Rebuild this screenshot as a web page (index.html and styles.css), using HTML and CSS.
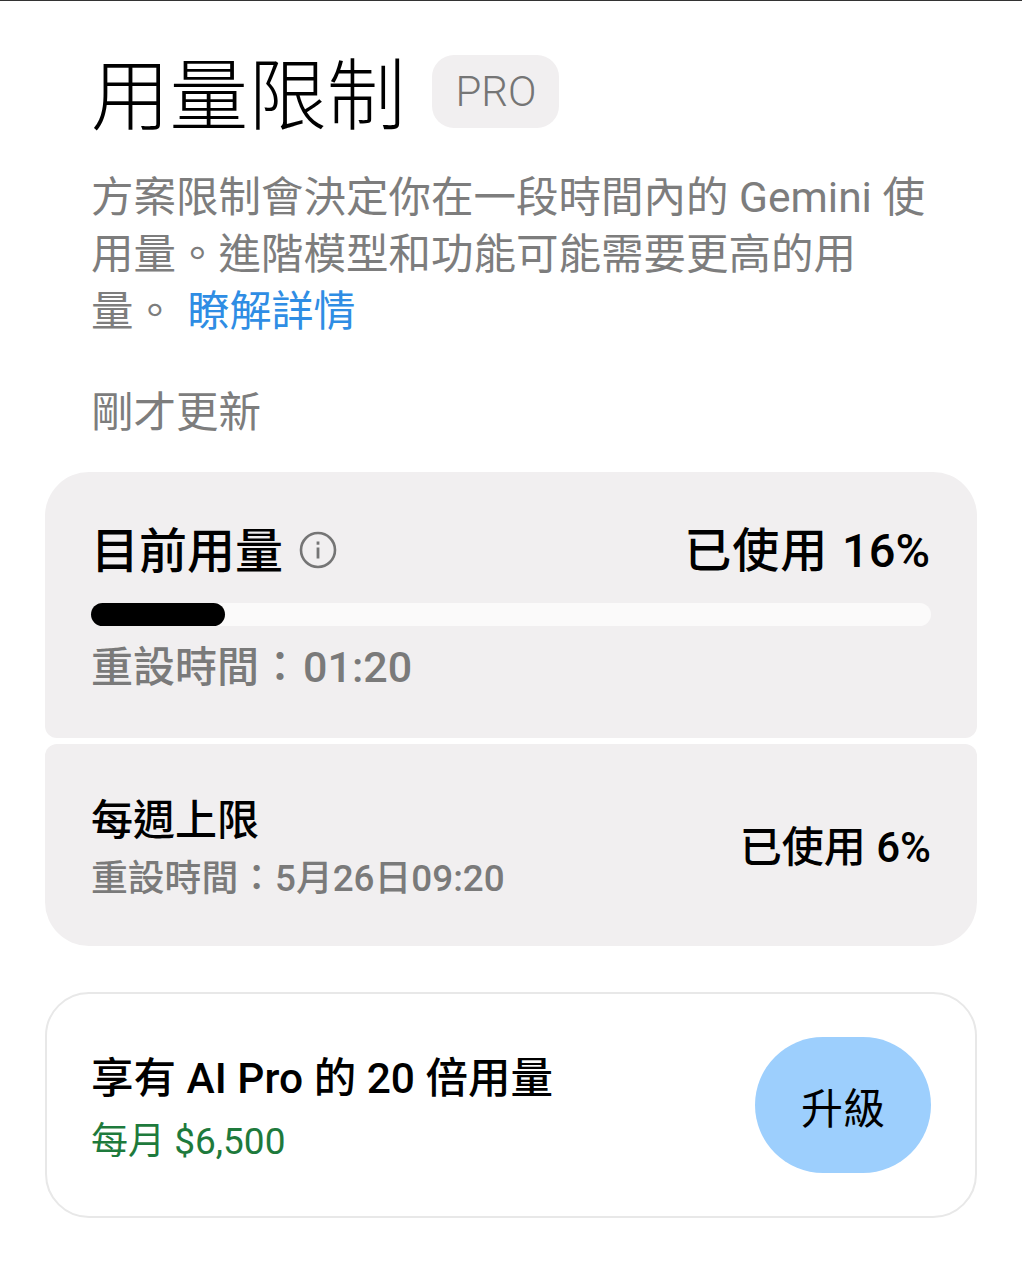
FILE: index.html
```html
<!DOCTYPE html>
<html lang="zh-Hant">
  <head>
    <meta charset="UTF-8" />
    <meta name="viewport" content="width=device-width, initial-scale=1.0" />
    <title>用量限制</title>
    <link rel="stylesheet" href="styles.css">
  </head>
  <body>
    <div class="page">
      <div class="intro">
        <div class="titleRow">
          <h1>用量限制</h1>
          <span class="badge">PRO</span>
        </div>
        <p class="desc">方案限制會決定你在一段時間內的 Gemini 使<br>用量。進階模型和功能可能需要更高的用<br>量。 <a href="#">瞭解詳情</a></p>
        <p class="updated">剛才更新</p>
      </div>

      <div class="usageCard current">
        <div class="rowTop">
          <div class="curTitle">
            <span class="curName">目前用量</span>
            <svg class="infoIcon" viewBox="0 0 38 38" width="38" height="38">
              <circle cx="19" cy="19" r="17" fill="none" stroke="#757575" stroke-width="2.6" />
              <rect x="17.6" y="16.5" width="2.8" height="11" fill="#757575" />
              <rect x="17.6" y="10.5" width="2.8" height="3.2" fill="#757575" />
            </svg>
          </div>
          <div class="curUsed"><span class="cjkWide">已使用</span> <span class="num">16%</span></div>
        </div>
        <div class="track"><div class="fill" style="width: 16%"></div></div>
        <div class="curReset">重設時間：<span class="num">01:20</span></div>
      </div>

      <div class="usageCard weekly">
        <div class="weekLeft">
          <div class="weekTitle">每週上限</div>
          <div class="weekReset">重設時間：5月26日09:20</div>
        </div>
        <div class="weekUsed">已使用 <span class="num">6%</span></div>
      </div>

      <div class="upgradeCard">
        <div class="upLeft">
          <div class="upTitle">享有 AI Pro 的 20 倍用量</div>
          <div class="upPrice">每月 $6,500</div>
        </div>
        <button class="upBtn">升級</button>
      </div>
    </div>
  </body>
</html>
```

FILE: styles.css
```css
* {
  box-sizing: border-box;
}
html,
body {
  margin: 0;
  padding: 0;
  background-color: #fff;
}
body {
  height: 1280px;
  overflow: hidden;
  font-family: Roboto, "Noto Sans CJK TC", sans-serif;
  color: #000;
  border-top: 1px solid #333;
}
.page {
  padding: 0 45px;
}
.intro {
  padding-left: 46px;
}
.titleRow {
  display: flex;
  align-items: flex-start;
  gap: 27px;
  padding-top: 54px;
}
.titleRow h1 {
  margin: 0;
  padding-top: 3px;
  font-size: 78.6px;
  line-height: 78px;
  font-weight: 300;
}
.badge {
  width: 127px;
  height: 73px;
  background-color: #f1eff0;
  border-radius: 22px;
  color: #757575;
  font-size: 42px;
  font-weight: 300;
  display: flex;
  align-items: center;
  justify-content: center;
}
.desc {
  margin: 33px 0 0;
  font-size: 42.5px;
  line-height: 57px;
  font-weight: 400;
  color: #7d7d7d;
}
.desc a {
  color: #2f8de4;
  text-decoration: none;
  font-size: 42px;
  margin-left: 1px;
}
.updated {
  margin: 44px 0 0;
  font-size: 42.5px;
  line-height: 57px;
  font-weight: 400;
  color: #7d7d7d;
}
.usageCard {
  background-color: #f1eff0;
  padding: 0 46px;
}
.current {
  margin-top: 31px;
  height: 266px;
  padding-top: 50px;
  border-radius: 44px 44px 12px 12px;
}
.rowTop {
  display: flex;
  justify-content: space-between;
  align-items: center;
  height: 56px;
}
.curTitle {
  display: flex;
  align-items: center;
  gap: 16px;
  font-size: 48px;
  font-weight: 500;
}
.curName {
  margin-bottom: 7px;
}
.curUsed {
  font-size: 47px;
  font-weight: 500;
  margin-bottom: 7px;
  margin-right: 1px;
}
.cjkWide {
  letter-spacing: 1px;
  margin-right: 2px;
}
.num {
  font-weight: 500;
}
.infoIcon {
  display: block;
}
.track {
  margin-top: 25px;
  height: 23px;
  background-color: #fbfafa;
  border-radius: 12px;
}
.fill {
  height: 100%;
  background-color: #000;
  border-radius: 12px;
}
.curReset {
  margin-top: 13px;
  font-size: 42px;
  line-height: 57px;
  font-weight: 500;
  color: #7a7a7a;
}
.curReset .num {
  font-size: 43px;
  margin-left: 2px;
}
.weekly {
  margin-top: 6px;
  height: 202px;
  display: flex;
  justify-content: space-between;
  align-items: center;
  border-radius: 12px 12px 44px 44px;
}
.weekLeft {
  padding-top: 8px;
}
.weekTitle {
  font-size: 42px;
  line-height: 57px;
  font-weight: 500;
}
.weekReset {
  margin-top: 1px;
  font-size: 36.8px;
  line-height: 57px;
  font-weight: 500;
  color: #7a7a7a;
}
.weekUsed {
  font-size: 42px;
  font-weight: 500;
  margin-bottom: 3px;
}
.upgradeCard {
  margin-top: 46px;
  height: 226px;
  padding: 0 44px;
  display: flex;
  justify-content: space-between;
  align-items: center;
  border: 2px solid #e8e8e8;
  border-radius: 44px;
}
.upLeft {
  padding-top: 10px;
}
.upTitle {
  font-size: 42.5px;
  line-height: 57px;
  font-weight: 500;
}
.upPrice {
  margin-top: 6px;
  font-size: 37px;
  line-height: 57px;
  color: #1e7a3c;
}
.upBtn {
  width: 176px;
  height: 136px;
  border: none;
  border-radius: 68px;
  background-color: #9dcffd;
  color: #000;
  font-family: inherit;
  font-size: 42px;
  font-weight: 400;
}
```
